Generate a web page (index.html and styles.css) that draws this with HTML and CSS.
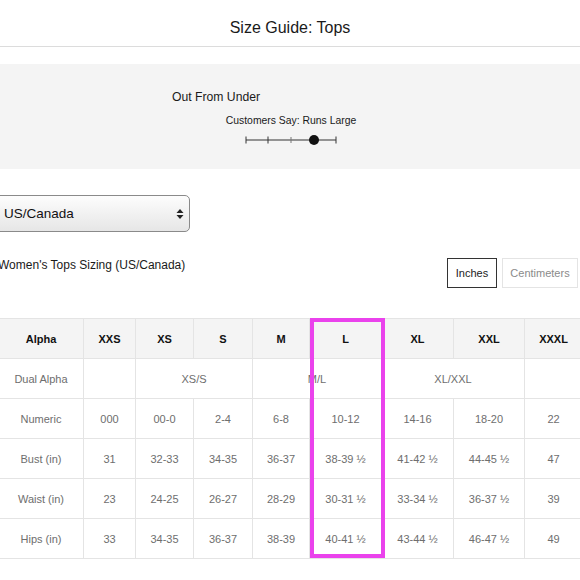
FILE: index.html
```html
<!DOCTYPE html>
<html lang="en">
<head>
<meta charset="utf-8">
<title>Size Guide: Tops</title>
<link rel="stylesheet" href="styles.css">
</head>
<body>
<header class="top">
  <h1 class="title">Size Guide: Tops</h1>
</header>

<section class="fit">
  <div class="fit-inner">
    <div class="brand">Out From Under</div>
    <div class="rating">
      <div class="rating-label">Customers Say: Runs Large</div>
      <svg class="scale" width="94" height="12" viewBox="0 0 94 12">
        <line x1="1" y1="6" x2="91" y2="6" stroke="#333" stroke-width="1"/>
        <line x1="1" y1="2.5" x2="1" y2="9.5" stroke="#333" stroke-width="1"/>
        <line x1="23" y1="2.5" x2="23" y2="9.5" stroke="#333" stroke-width="1"/>
        <line x1="46" y1="3" x2="46" y2="9" stroke="#777" stroke-width="1"/>
        <line x1="91" y1="2.5" x2="91" y2="9.5" stroke="#333" stroke-width="1"/>
        <circle cx="69" cy="6" r="5" fill="#111"/>
      </svg>
    </div>
  </div>
</section>

<div class="region">
  <div class="select">
    <span class="select-text">US/Canada</span>
    <svg class="select-arrows" width="8" height="12" viewBox="0 0 8 12">
      <path d="M4 1 L7.5 5 L0.5 5 Z" fill="#222"/>
      <path d="M4 11 L7.5 7 L0.5 7 Z" fill="#222"/>
    </svg>
  </div>
</div>

<div class="sizing-head">
  <div class="sizing-title">Women's Tops Sizing (US/Canada)</div>
  <div class="units">
    <button class="unit unit-active">Inches</button>
    <button class="unit">Centimeters</button>
  </div>
</div>

<div class="table-wrap">
  <table class="sizes">
    <colgroup>
      <col class="c-label">
      <col class="c-xxs">
      <col class="c-xs">
      <col class="c-s">
      <col class="c-m">
      <col class="c-l">
      <col class="c-xl">
      <col class="c-xxl">
      <col class="c-xxxl">
    </colgroup>
    <thead>
      <tr><th>Alpha</th><th>XXS</th><th>XS</th><th>S</th><th>M</th><th>L</th><th>XL</th><th>XXL</th><th>XXXL</th></tr>
    </thead>
    <tbody>
      <tr><td>Dual Alpha</td><td></td><td colspan="2">XS/S</td><td colspan="2">M/L</td><td colspan="2">XL/XXL</td><td></td></tr>
      <tr><td>Numeric</td><td>000</td><td>00-0</td><td>2-4</td><td>6-8</td><td>10-12</td><td>14-16</td><td>18-20</td><td>22</td></tr>
      <tr><td>Bust (in)</td><td>31</td><td>32-33</td><td>34-35</td><td>36-37</td><td>38-39 ½</td><td>41-42 ½</td><td>44-45 ½</td><td>47</td></tr>
      <tr><td>Waist (in)</td><td>23</td><td>24-25</td><td>26-27</td><td>28-29</td><td>30-31 ½</td><td>33-34 ½</td><td>36-37 ½</td><td>39</td></tr>
      <tr><td>Hips (in)</td><td>33</td><td>34-35</td><td>36-37</td><td>38-39</td><td>40-41 ½</td><td>43-44 ½</td><td>46-47 ½</td><td>49</td></tr>
    </tbody>
  </table>
  <div class="highlight"></div>
</div>
</body>
</html>
```

FILE: styles.css
```css
html, body {
  margin: 0;
  padding: 0;
  overflow: hidden;
  background: #fff;
}

body {
  width: 580px;
  font-family: "Liberation Sans", Arial, sans-serif;
  color: #222;
}

.top {
  height: 36px;
  padding-top: 10px;
  border-bottom: 1px solid #dcdcdc;
  display: flex;
  align-items: center;
  justify-content: center;
}

.title {
  margin: 0;
  font-size: 16px;
  font-weight: normal;
  color: #1a1a1a;
  line-height: 18px;
}

.fit {
  margin-top: 17px;
  height: 105px;
  background: #f4f4f4;
  box-sizing: border-box;
  padding: 25px 0 0 172px;
}

.fit-inner {
  width: 238px;
}

.brand {
  font-size: 12.2px;
  line-height: 16px;
  color: #1a1a1a;
}

.rating {
  margin-top: 9px;
  text-align: center;
}

.rating-label {
  font-size: 10.4px;
  line-height: 14px;
  color: #1a1a1a;
}

.scale {
  display: block;
  margin: 6px auto 0;
  position: relative;
  left: 1px;
}

.region {
  margin-top: 26px;
  margin-left: -8px;
}

.select {
  width: 198px;
  height: 37px;
  box-sizing: border-box;
  border: 1px solid #8a8a8a;
  border-radius: 5px;
  background: linear-gradient(#fdfdfd, #e6e6e6);
  display: flex;
  align-items: center;
  justify-content: space-between;
  padding: 0 5px 0 11px;
}

.select-text {
  font-size: 13.5px;
  color: #111;
}

.sizing-head {
  margin-top: 26px;
  display: flex;
  justify-content: space-between;
  align-items: flex-start;
  margin-left: -2px;
  margin-right: 2px;
}

.sizing-title {
  font-size: 12px;
  line-height: 16px;
  margin-top: -1px;
  color: #1a1a1a;
}

.units {
  display: flex;
  gap: 5px;
}

.unit {
  font-family: "Liberation Sans", Arial, sans-serif;
  font-size: 11px;
  height: 30px;
  box-sizing: border-box;
  padding: 0;
  background: #fff;
  border: 1px solid #e4e4e4;
  color: #8a8a8a;
  width: 76px;
}

.unit-active {
  width: 50px;
  border: 1px solid #333;
  color: #222;
}

.table-wrap {
  position: relative;
  margin-top: 30px;
  margin-left: -2px;
  width: 584px;
}

.sizes {
  border-collapse: collapse;
  table-layout: fixed;
  width: 584px;
  font-size: 11px;
}

.c-label { width: 85px; }
.c-xxs { width: 52px; }
.c-xs { width: 58px; }
.c-s { width: 59px; }
.c-m { width: 57px; }
.c-l { width: 72px; }
.c-xl { width: 72px; }
.c-xxl { width: 71px; }
.c-xxxl { width: 58px; }

.sizes th,
.sizes td {
  border: 1px solid #e4e4e4;
  height: 40px;
  padding: 0;
  text-align: center;
  vertical-align: middle;
  box-sizing: border-box;
}

.sizes th {
  background: #f4f4f4;
  font-weight: bold;
  color: #111;
}

.sizes td {
  color: #6e6e6e;
}

.highlight {
  position: absolute;
  left: 312px;
  top: 0;
  width: 75px;
  height: 240px;
  box-sizing: border-box;
  border: 4px solid #ea42ec;
}
```
